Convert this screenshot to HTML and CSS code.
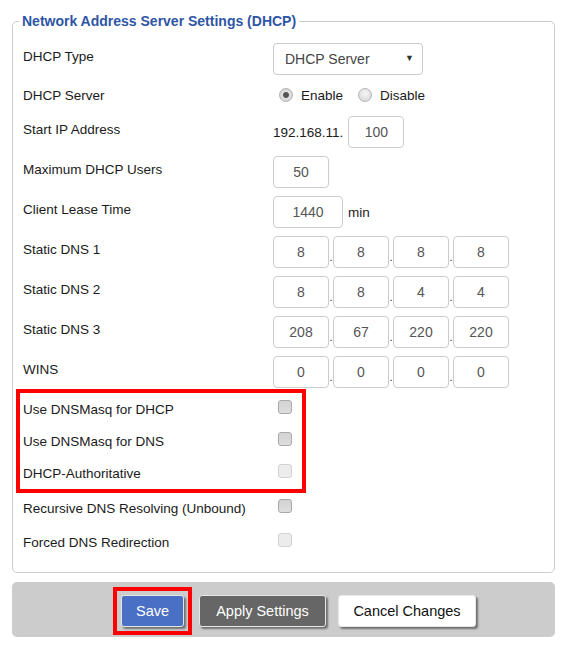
FILE: index.html
```html
<!DOCTYPE html>
<html lang="en">
<head>
    <meta charset="UTF-8">
    <meta name="viewport" content="width=device-width, initial-scale=1.0">
    <title>DHCP Settings</title>
    <link rel="stylesheet" href="styles.css">
</head>
<body>
    <div class="page">
        <fieldset class="settings">
            <legend>Network Address Server Settings (DHCP)</legend>

            <div class="row row-select">
                <span class="label">DHCP Type</span>
                <div class="select-wrap">
                    <select>
                        <option>DHCP Server</option>
                        <option>DHCP Forwarder</option>
                    </select>
                </div>
            </div>

            <div class="row row-radio">
                <span class="label">DHCP Server</span>
                <label class="radio"><input type="radio" name="dhcpd" checked> Enable</label>
                <label class="radio"><input type="radio" name="dhcpd"> Disable</label>
            </div>

            <div class="row">
                <span class="label">Start IP Address</span>
                <span class="prefix">192.168.11.</span>
                <input class="num" type="text" value="100">
            </div>

            <div class="row">
                <span class="label">Maximum DHCP Users</span>
                <input class="num" type="text" value="50">
            </div>

            <div class="row">
                <span class="label">Client Lease Time</span>
                <input class="num wide" type="text" value="1440">
                <span class="unit">min</span>
            </div>

            <div class="row">
                <span class="label">Static DNS 1</span>
                <div class="ip">
                    <input class="num" type="text" value="8"><span class="dot">.</span><input class="num" type="text" value="8"><span class="dot">.</span><input class="num" type="text" value="8"><span class="dot">.</span><input class="num" type="text" value="8">
                </div>
            </div>

            <div class="row">
                <span class="label">Static DNS 2</span>
                <div class="ip">
                    <input class="num" type="text" value="8"><span class="dot">.</span><input class="num" type="text" value="8"><span class="dot">.</span><input class="num" type="text" value="4"><span class="dot">.</span><input class="num" type="text" value="4">
                </div>
            </div>

            <div class="row">
                <span class="label">Static DNS 3</span>
                <div class="ip">
                    <input class="num" type="text" value="208"><span class="dot">.</span><input class="num" type="text" value="67"><span class="dot">.</span><input class="num" type="text" value="220"><span class="dot">.</span><input class="num" type="text" value="220">
                </div>
            </div>

            <div class="row">
                <span class="label">WINS</span>
                <div class="ip">
                    <input class="num" type="text" value="0"><span class="dot">.</span><input class="num" type="text" value="0"><span class="dot">.</span><input class="num" type="text" value="0"><span class="dot">.</span><input class="num" type="text" value="0">
                </div>
            </div>

            <!-- marked group -->
            <div class="highlight">
                <div class="row row-check short">
                    <span class="label">Use DNSMasq for DHCP</span>
                    <input type="checkbox">
                </div>
                <div class="row row-check short">
                    <span class="label">Use DNSMasq for DNS</span>
                    <input type="checkbox">
                </div>
                <div class="row row-check short">
                    <span class="label">DHCP-Authoritative</span>
                    <input type="checkbox" disabled>
                </div>
            </div>

            <div class="row row-check after">
                <span class="label">Recursive DNS Resolving (Unbound)</span>
                <input type="checkbox">
            </div>
            <div class="row row-check">
                <span class="label">Forced DNS Redirection</span>
                <input type="checkbox" disabled>
            </div>
        </fieldset>

        <div class="actions">
            <span class="mark"><button class="btn btn-save">Save</button></span>
            <button class="btn btn-apply">Apply Settings</button>
            <button class="btn btn-cancel">Cancel Changes</button>
        </div>
    </div>
</body>
</html>
```

FILE: styles.css
```css
* {
    margin: 0;
    padding: 0;
    box-sizing: border-box;
}

body {
    font-family: "Liberation Sans", Arial, sans-serif;
    font-size: 13.5px;
    color: #1a1a1a;
    background: #fff;
}

.page {
    padding: 12px 13px 0 12px;
}

.settings {
    border: 1px solid #ccc;
    border-radius: 5px;
    padding: 9px 10px 13px 10px;
}

.settings legend {
    font-size: 14px;
    font-weight: bold;
    line-height: 18px;
    color: #2e55a6;
    padding: 0 3px;
    margin-left: -4px;
}

.row {
    display: flex;
    align-items: center;
    height: 40px;
}

.label {
    width: 250px;
    flex: none;
    padding-bottom: 6px;
}

.row-radio .label,
.row-check .label {
    padding-bottom: 0;
}

.row-radio {
    height: 33px;
}

/* select */
.select-wrap {
    position: relative;
    width: 150px;
    height: 32px;
}
.select-wrap::after {
    content: '\25BC';
    position: absolute;
    right: 9px;
    top: 10px;
    font-size: 9px;
    color: #333;
    pointer-events: none;
}
.select-wrap select {
    appearance: none;
    -webkit-appearance: none;
    width: 100%;
    height: 100%;
    border: 1px solid #ccc;
    border-radius: 4px;
    background: #fff;
    padding-left: 11px;
    font-family: inherit;
    font-size: 14px;
    color: #444;
}

/* radios */
.radio {
    display: flex;
    align-items: center;
    margin-left: 6px;
    margin-right: 9px;
}
.radio input {
    appearance: none;
    -webkit-appearance: none;
    width: 14px;
    height: 14px;
    border: 1px solid #b4b4b4;
    border-radius: 50%;
    background: radial-gradient(circle at 50% 40%, #f6f6f6, #d2d2d2);
    margin-right: 8px;
    margin-top: -2px;
}
.radio input:checked {
    background: radial-gradient(circle, #555 0, #555 2.5px, #e2e2e2 3.5px, #cfcfcf 7px);
}

/* text inputs */
.num {
    width: 56px;
    height: 32px;
    border: 1px solid #ccc;
    border-radius: 4px;
    text-align: center;
    font-family: inherit;
    font-size: 14px;
    color: #555;
    background: #fff;
}
.num.wide {
    width: 70px;
}
.prefix {
    margin-right: 5px;
}
.unit {
    margin-left: 5px;
}

.ip {
    display: flex;
    height: 32px;
}
.dot {
    width: 4px;
    display: flex;
    align-items: flex-end;
    justify-content: center;
    padding-bottom: 5px;
    font-size: 11px;
    line-height: 1;
}

/* checkboxes */
.row-check {
    height: 34px;
}
.row-check.short {
    height: 32px;
}
.row-check.after {
    margin-top: 2px;
}
.row-check input {
    appearance: none;
    -webkit-appearance: none;
    width: 14px;
    height: 14px;
    margin: 0 0 5px 5px;
    border: 1px solid #a8a8a8;
    border-radius: 3px;
    background: linear-gradient(#d2d2d2, #dedede);
}
.row-check input:disabled {
    border-color: #d2d2d2;
    background: #ececec;
}

.highlight {
    margin-top: 1px;
    margin-left: -3px;
    width: 282px;
    padding-left: 3px;
    outline: 4px solid #f00;
}

/* bottom buttons */
.actions {
    margin-top: 9px;
    height: 55px;
    background: #ccc;
    border-radius: 5px;
    display: flex;
    align-items: flex-start;
    padding: 13px 0 0 109px;
}

.mark {
    display: flex;
    margin: -4px;
    padding: 4px;
    outline: 4px solid #f00;
}

.btn {
    height: 32px;
    padding: 0;
    border: 1px solid #e6e6e6;
    border-radius: 3px;
    font-family: inherit;
    font-size: 14.5px;
    box-shadow: 2px 2px 2px rgba(0, 0, 0, 0.45);
    cursor: pointer;
}

.btn-save {
    width: 63px;
    background: #4a70c6;
    color: #fff;
}

.btn-apply {
    width: 127px;
    margin-left: 15px;
    background: #666;
    color: #fff;
}

.btn-cancel {
    width: 138px;
    margin-left: 12px;
    background: #fff;
    color: #111;
}
```
